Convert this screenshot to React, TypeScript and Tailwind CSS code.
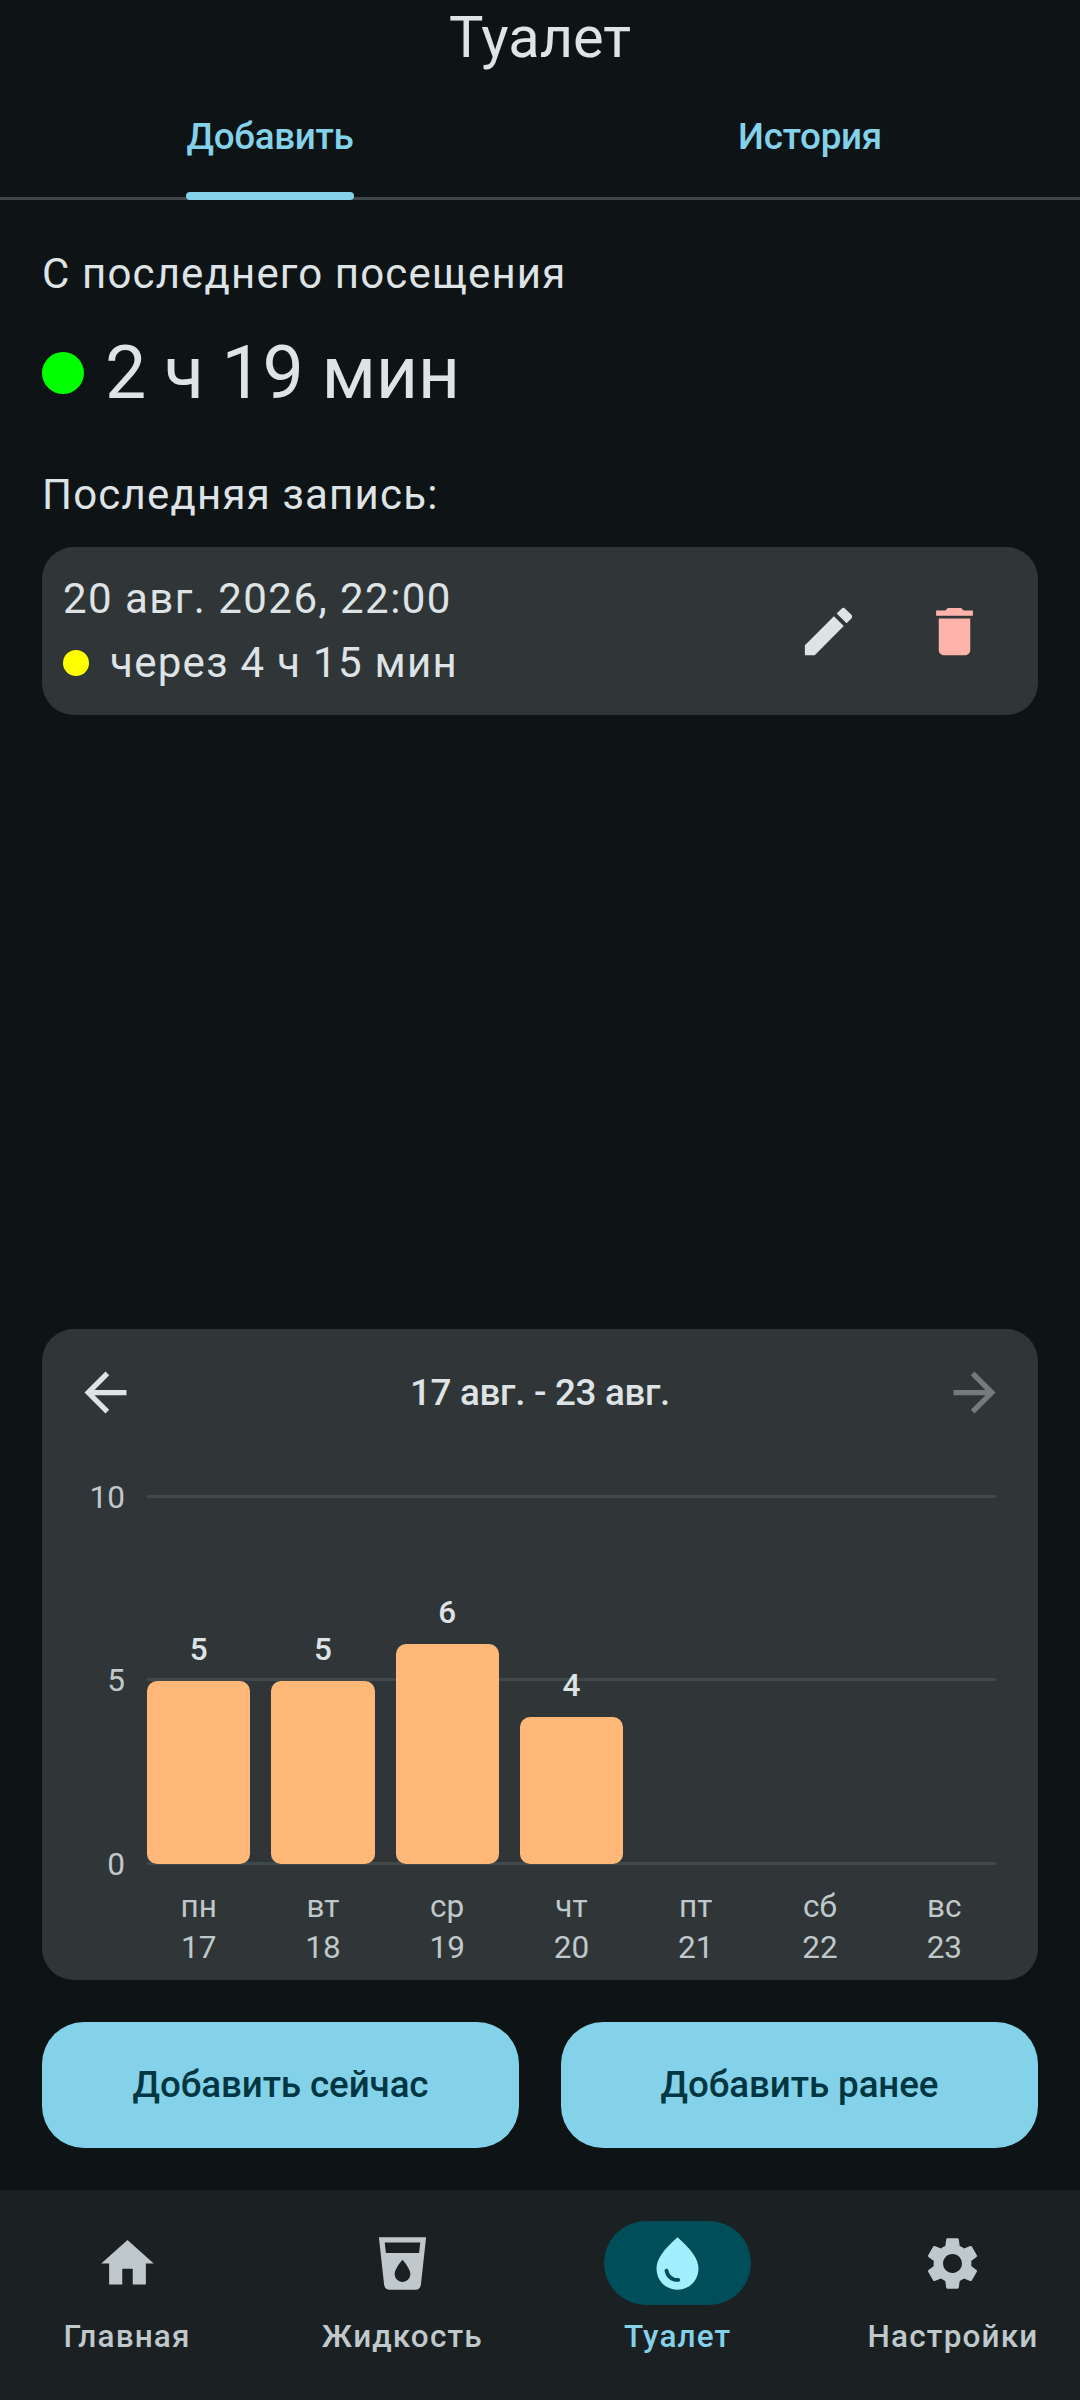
import React from 'react';

const roboto = "font-['Roboto',sans-serif]";

const days = [
  { d: 'пн', n: 17, v: 5 },
  { d: 'вт', n: 18, v: 5 },
  { d: 'ср', n: 19, v: 6 },
  { d: 'чт', n: 20, v: 4 },
  { d: 'пт', n: 21, v: 0 },
  { d: 'сб', n: 22, v: 0 },
  { d: 'вс', n: 23, v: 0 },
];

const UNIT = 36.7;

function Icon({ d, className }: { d: string; className?: string }) {
  return (
    <svg viewBox="0 0 24 24" className={`w-[63px] h-[63px] shrink-0 ${className ?? ''}`} fill="currentColor">
      <path d={d} fillRule="evenodd" />
    </svg>
  );
}

const icons = {
  edit: 'M3 17.25V21h3.75L17.81 9.94l-3.75-3.75L3 17.25zM20.71 7.04c.39-.39.39-1.02 0-1.41l-2.34-2.34c-.39-.39-1.02-.39-1.41 0l-1.83 1.83 3.75 3.75 1.83-1.83z',
  del: 'M6 19c0 1.1.9 2 2 2h8c1.1 0 2-.9 2-2V7H6v12zM19 4h-3.5l-1-1h-5l-1 1H5v2h14V4z',
  back: 'M20 11H7.83l5.59-5.59L12 4l-8 8 8 8 1.41-1.41L7.83 13H20v-2z',
  forward: 'M4 11h12.17l-5.59-5.59L12 4l8 8-8 8-1.41-1.41L16.17 13H4v-2z',
  home: 'M10 20v-6h4v6h5v-8h3L12 3 2 12h3v8z',
  cup: 'M3 2l2.01 18.23C5.13 21.23 5.97 22 7 22h10c1.03 0 1.87-.77 1.99-1.77L21 2H3zm9 17c-1.66 0-3-1.34-3-3 0-2 3-5.4 3-5.4s3 3.4 3 5.4c0 1.66-1.34 3-3 3zm6.33-11H5.67l-.44-4h13.53l-.43 4z',
  drop: 'M12 2c-5.33 4.55-8 8.48-8 11.8 0 4.98 3.8 8.2 8 8.2s8-3.22 8-8.2C20 10.48 17.33 6.55 12 2zM7.83 14c.37 0 .67.26.74.62.41 2.22 2.28 2.98 3.64 2.87.43-.02.79.32.79.75 0 .4-.32.73-.72.75-2.13.13-4.62-1.09-5.19-4.12C7.01 14.42 7.37 14 7.83 14z',
  gear: 'M19.14 12.94c.04-.3.06-.61.06-.94 0-.32-.02-.64-.07-.94l2.03-1.58c.18-.14.23-.41.12-.61l-1.92-3.32c-.12-.22-.37-.29-.59-.22l-2.39.96c-.5-.38-1.03-.7-1.62-.94l-.36-2.54c-.04-.24-.24-.41-.48-.41h-3.84c-.24 0-.43.17-.47.41l-.36 2.54c-.59.24-1.13.57-1.62.94l-2.39-.96c-.22-.08-.47 0-.59.22L2.74 8.87c-.12.21-.08.47.12.61l2.03 1.58c-.05.3-.09.63-.09.94s.02.64.07.94l-2.03 1.58c-.18.14-.23.41-.12.61l1.92 3.32c.12.22.37.29.59.22l2.39-.96c.5.38 1.03.7 1.62.94l.36 2.54c.05.24.24.41.48.41h3.84c.24 0 .44-.17.47-.41l.36-2.54c.59-.24 1.13-.56 1.62-.94l2.39.96c.22.08.47 0 .59-.22l1.92-3.32c.12-.22.07-.47-.12-.61l-2.01-1.58zM12 15.6c-1.98 0-3.6-1.62-3.6-3.6s1.62-3.6 3.6-3.6 3.6 1.62 3.6 3.6-1.62 3.6-3.6 3.6z',
};

function Tabs() {
  return (
    <div className="grid grid-cols-2 h-[126px] border-b-[3px] border-[#3f484a]">
      <div className="flex justify-center items-center">
        <div className="relative h-full flex items-center">
          <span className="mt-[2px] text-[36.75px] font-medium leading-[50px] text-[#84d2e9] tracking-[-0.25px]">Добавить</span>
          <div className="absolute left-0 right-0 -bottom-[3px] h-[8px] rounded-[4px] bg-[#84d2e9]" />
        </div>
      </div>
      <div className="flex justify-center items-center">
        <span className="mt-[2px] text-[36.75px] font-medium leading-[50px] text-[#84d2e9] tracking-[-0.25px]">История</span>
      </div>
    </div>
  );
}

function LastRecord() {
  return (
    <div className="mt-[24px] h-[168px] rounded-[32px] bg-[#303638] pl-[21px] pr-[52px] flex items-center justify-between">
      <div className="flex flex-col gap-[8px] mb-[3px]">
        <div className="mt-[2px] text-[42px] leading-[56px] tracking-[1.45px] text-[#dee3e5]">20 авг. 2026, 22:00</div>
        <div className="flex items-center">
          <div className="w-[26px] h-[26px] rounded-full bg-[#ffff00] mr-[21px]" />
          <span className="text-[42px] leading-[56px] tracking-[1.3px] text-[#dee3e5]">через 4 ч 15 мин</span>
        </div>
      </div>
      <div className="flex items-center gap-[63px]">
        <Icon d={icons.edit} className="text-[#dee3e5]" />
        <Icon d={icons.del} className="text-[#ffb4ab]" />
      </div>
    </div>
  );
}

function WeekChart() {
  const grid = [
    { label: '10', pos: 'top-0' },
    { label: '5', pos: 'top-[183px]' },
    { label: '0', pos: 'top-[367px]' },
  ];
  return (
    <div className="h-[651px] rounded-[32px] bg-[#303638] pt-[32px]">
      <div className="flex items-center justify-between px-[32px]">
        <Icon d={icons.back} className="text-[#dee3e5]" />
        <span className="text-[36.75px] font-medium leading-[50px] tracking-[-0.3px] text-[#dee3e5]">17 авг. - 23 авг.</span>
        <Icon d={icons.forward} className="text-[#dee3e5]/40" />
      </div>
      <div className="relative mt-[72px] ml-[105px] mr-[42px] h-[368px]">
        {grid.map((g) => (
          <div key={g.label} className={`absolute inset-x-0 -mt-[1px] h-[3px] bg-[#3f484a] ${g.pos}`}>
            <span className="absolute right-full mr-[22px] top-1/2 mt-[1px] -translate-y-1/2 text-[31.5px] leading-[40px] text-[#bfc8ca]">{g.label}</span>
          </div>
        ))}
        <div className="relative grid grid-cols-7 gap-x-[21px] h-full">
          {days.map((day) => (
            <div key={day.n} className="flex flex-col justify-end items-center">
              {day.v > 0 && (
                <>
                  <span className="text-[31.5px] font-medium leading-[36px] mb-[13px] text-[#dee3e5]">{day.v}</span>
                  <div className="w-full rounded-[10px] bg-[#ffb878]" style={{ height: day.v * UNIT }} />
                </>
              )}
            </div>
          ))}
        </div>
      </div>
      <div className="mt-[23px] ml-[105px] mr-[42px] grid grid-cols-7 gap-x-[21px]">
        {days.map((day) => (
          <div key={day.n} className="flex flex-col items-center gap-[1px] text-[31.5px] leading-[40px] text-[#bfc8ca]">
            <span>{day.d}</span>
            <span>{day.n}</span>
          </div>
        ))}
      </div>
    </div>
  );
}

function BottomNav() {
  const items = [
    { label: 'Главная', icon: icons.home },
    { label: 'Жидкость', icon: icons.cup },
    { label: 'Туалет', icon: icons.drop, active: true },
    { label: 'Настройки', icon: icons.gear },
  ];
  return (
    <div className="h-[210px] bg-[#1b2023] flex justify-between px-[64px] pt-[31px]">
      {items.map((it) => (
        <div key={it.label} className="w-[126px] flex flex-col items-center">
          <div className={`w-[147px] h-[84px] shrink-0 rounded-full flex items-center justify-center ${it.active ? 'bg-[#004e5a]' : ''}`}>
            <Icon d={it.icon} className={it.active ? 'text-[#a1efff]' : 'text-[#bfc8ca]'} />
          </div>
          <span className={`mt-[11px] text-[31.5px] font-medium leading-[42px] tracking-[1.15px] whitespace-nowrap ${it.active ? 'text-[#84d2e9]' : 'text-[#bfc8ca]'}`}>
            {it.label}
          </span>
        </div>
      ))}
    </div>
  );
}

export default function App() {
  return (
    <div className={`w-[1080px] h-[2400px] bg-[#0e1416] flex flex-col overflow-hidden ${roboto}`}>
      <div className="h-[74px] flex items-center justify-center text-[57.75px] leading-[74px] text-[#dee3e5]">Туалет</div>
      <Tabs />

      <div className="flex-1 flex flex-col px-[42px]">
        <div className="mt-[46px] text-[42px] leading-[56px] tracking-[1.15px] text-[#dee3e5]">С последнего посещения</div>
        <div className="mt-[29px] h-[84px] flex items-center">
          <div className="w-[42px] h-[42px] rounded-full bg-[#00ff00] mr-[21px]" />
          <span className="text-[73.5px] leading-[84px] tracking-[-0.3px] text-[#dee3e5]">2 ч 19 мин</span>
        </div>
        <div className="mt-[52px] text-[42px] leading-[56px] tracking-[1.2px] text-[#dee3e5]">Последняя запись:</div>
        <LastRecord />

        <div className="mt-auto">
          <WeekChart />
        </div>

        <div className="mt-[42px] mb-[42px] grid grid-cols-2 gap-[42px]">
          <button className="h-[126px] rounded-[42px] bg-[#84d2e9] text-[36.75px] font-medium tracking-[-0.1px] text-[#003641]">Добавить сейчас</button>
          <button className="h-[126px] rounded-[42px] bg-[#84d2e9] text-[36.75px] font-medium tracking-[-0.1px] text-[#003641]">Добавить ранее</button>
        </div>
      </div>

      <BottomNav />
    </div>
  );
}
